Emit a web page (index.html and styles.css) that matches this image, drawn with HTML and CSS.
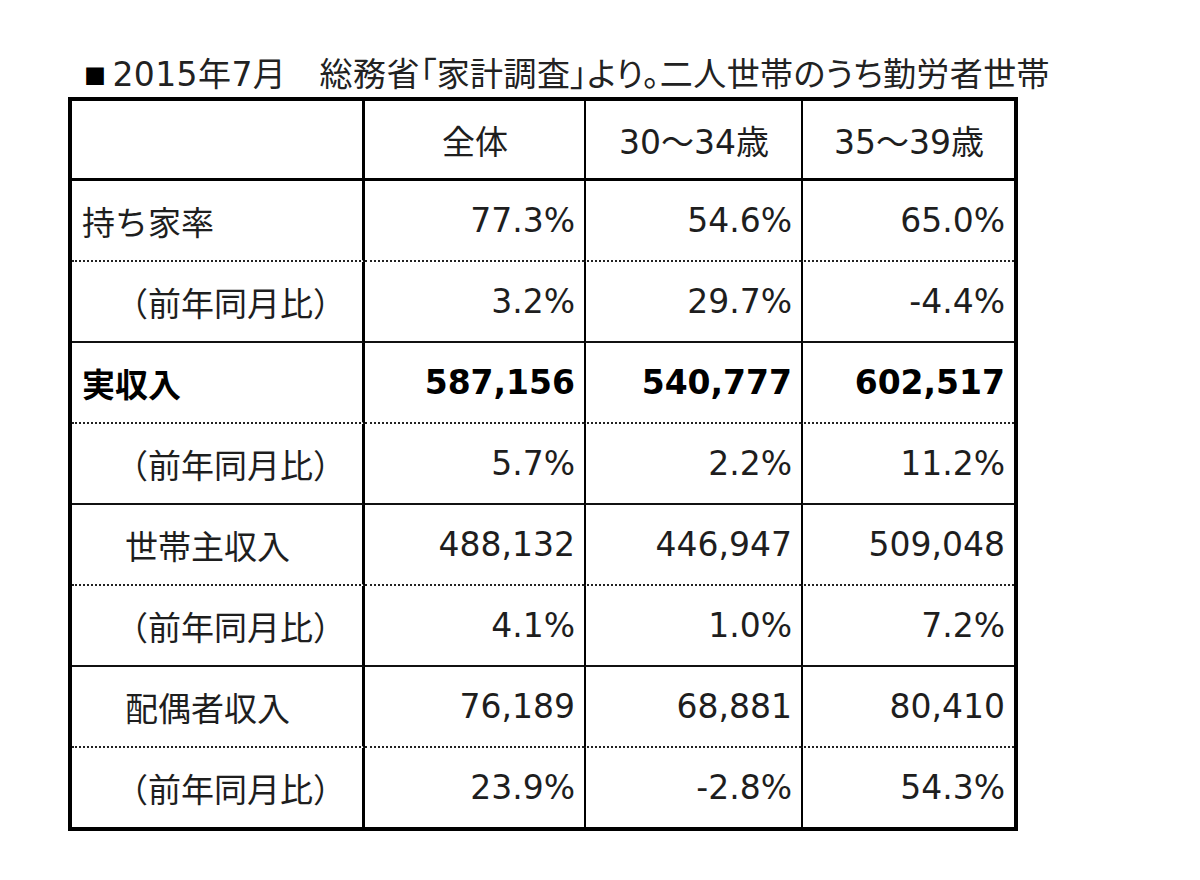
FILE: index.html
```html
<!DOCTYPE html>
<html lang="ja">
<head>
<meta charset="utf-8">
<title>家計調査</title>
<link rel="stylesheet" href="styles.css">
</head>
<body>
<div class="page">
  <div class="title"><span class="sq">■</span>2015年7月　総務省「家計調査」より。二人世帯のうち勤労者世帯</div>
  <table class="data">
    <colgroup>
      <col class="c1"><col class="c2"><col class="c3"><col class="c4">
    </colgroup>
    <thead>
      <tr class="head">
        <th class="label"></th><th>全体</th><th>30～34歳</th><th>35～39歳</th>
      </tr>
    </thead>
    <tbody>
      <tr class="dot">
        <td class="label">持ち家率</td><td>77.3%</td><td>54.6%</td><td>65.0%</td>
      </tr>
      <tr class="solid">
        <td class="label sub">（前年同月比）</td><td>3.2%</td><td>29.7%</td><td>-4.4%</td>
      </tr>
      <tr class="dot strong">
        <td class="label">実収入</td><td>587,156</td><td>540,777</td><td>602,517</td>
      </tr>
      <tr class="solid">
        <td class="label sub">（前年同月比）</td><td>5.7%</td><td>2.2%</td><td>11.2%</td>
      </tr>
      <tr class="dot">
        <td class="label item">世帯主収入</td><td>488,132</td><td>446,947</td><td>509,048</td>
      </tr>
      <tr class="solid">
        <td class="label sub">（前年同月比）</td><td>4.1%</td><td>1.0%</td><td>7.2%</td>
      </tr>
      <tr class="dot">
        <td class="label item">配偶者収入</td><td>76,189</td><td>68,881</td><td>80,410</td>
      </tr>
      <tr class="last">
        <td class="label sub">（前年同月比）</td><td>23.9%</td><td>-2.8%</td><td>54.3%</td>
      </tr>
    </tbody>
  </table>
</div>
</body>
</html>
```
FILE: styles.css
```css
html, body {
  margin: 0;
  padding: 0;
  background: #ffffff;
}

body {
  font-family: "DejaVu Sans", "Noto Sans CJK JP", sans-serif;
  color: #1e1e1e;
}

.page {
  padding: 53px 0 0 68px;
}

.title {
  font-size: 33px;
  line-height: 42px;
  height: 42px;
  padding-left: 16px;
  margin-bottom: 2px;
  white-space: nowrap;
  letter-spacing: 0.4px;
  font-feature-settings: "palt";
  color: #222;
}

.title .sq {
  font-family: "Noto Sans CJK JP", sans-serif;
  font-size: 22px;
  margin-right: 6px;
  vertical-align: 2px;
  color: #000;
}

.data {
  border: 4px solid #000;
  border-collapse: separate;
  border-spacing: 0;
  table-layout: fixed;
  width: 950px;
  font-size: 33px;
}

.c1 { width: 293px; }
.c2 { width: 219px; }
.c3 { width: 217px; }
.c4 { width: 213px; }

.data th,
.data td {
  padding: 0 9px 0 10px;
  text-align: right;
  white-space: nowrap;
  border-left: 2px solid #000;
  font-weight: normal;
}

.data th.label,
.data td.label {
  border-left: none;
  border-right: 3px solid #000;
  text-align: left;
  font-family: "Noto Sans CJK JP", sans-serif;
}

.data th.label + th,
.data td.label + td {
  border-left: none;
}

.data th {
  text-align: center;
  height: 77px;
  border-bottom: 3px solid #000;
}

.data tbody tr { height: 81px; }
.data tbody tr.last { height: 79px; }

.data tr.dot td { border-bottom: 2px dotted #222; }
.data tr.solid td { border-bottom: 2px solid #111; }

.data td.sub { padding-left: 43px; }
.data td.item { padding-left: 53px; }

.data tr.strong td {
  font-weight: bold;
  color: #000;
}
```
